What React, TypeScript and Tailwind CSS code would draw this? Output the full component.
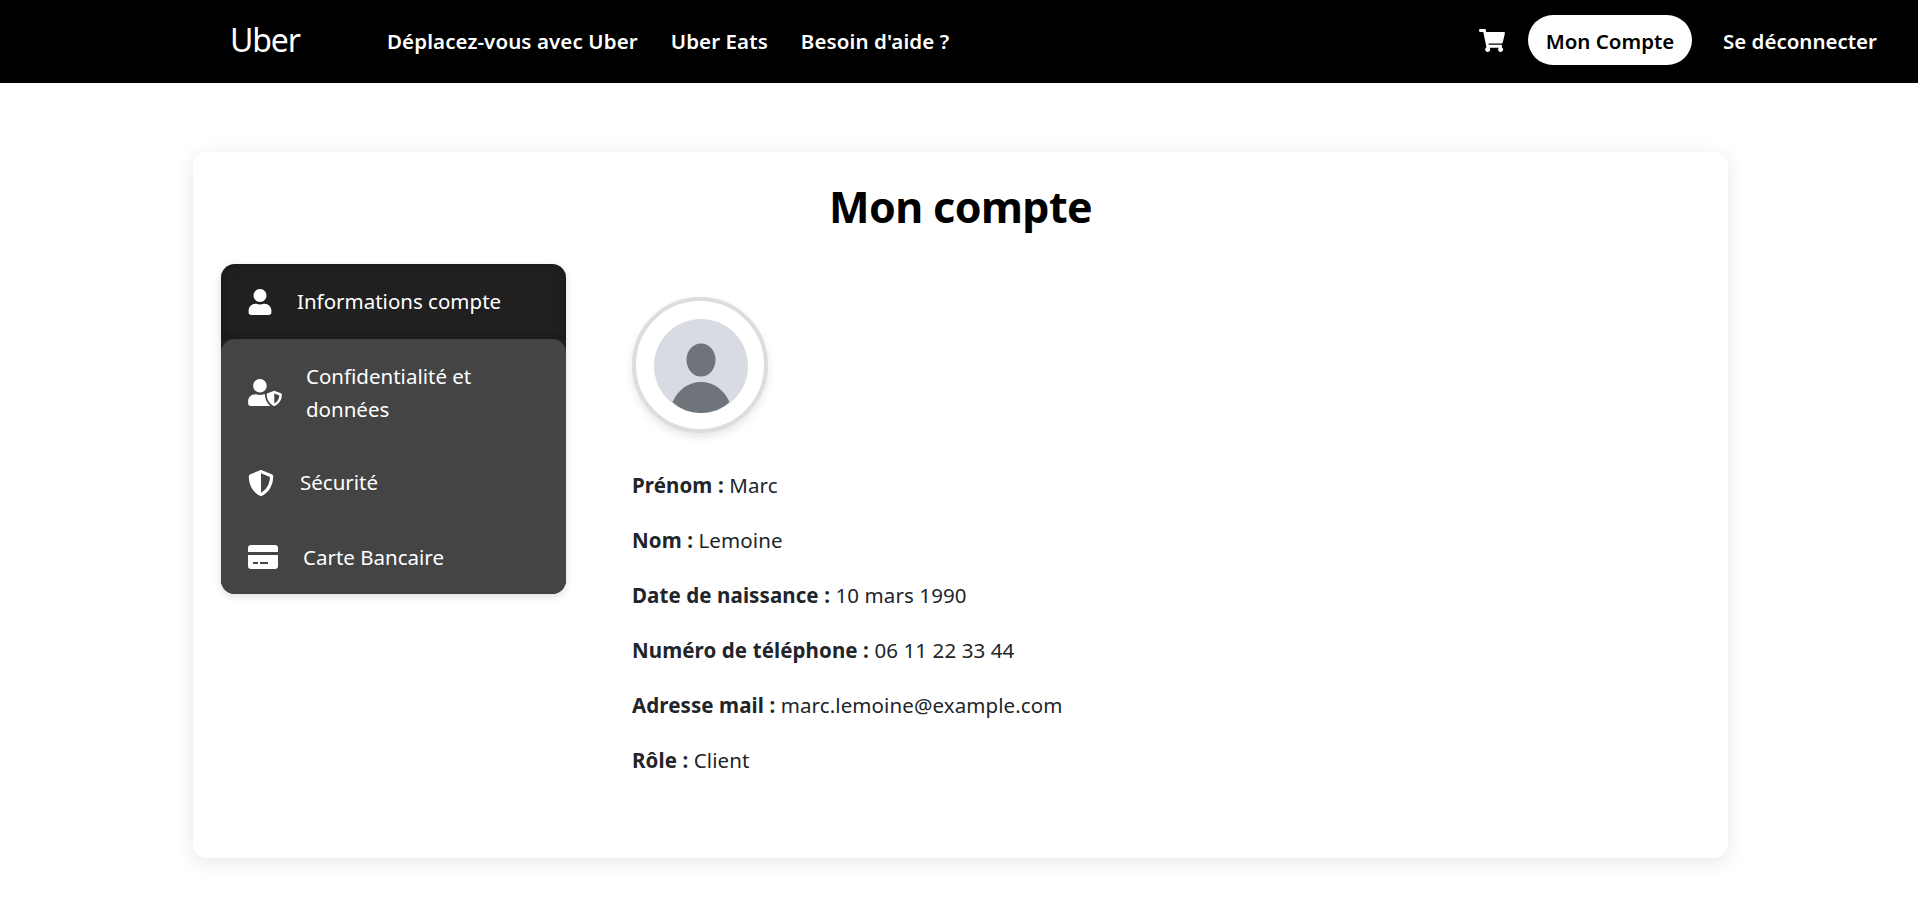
import { FaShieldAlt, FaShoppingCart, FaUser, FaUserShield } from "react-icons/fa";

const fields = [
  { label: "Prénom :", value: "Marc" },
  { label: "Nom :", value: "Lemoine" },
  { label: "Date de naissance :", value: "10 mars 1990" },
  { label: "Numéro de téléphone :", value: "06 11 22 33 44" },
  { label: "Adresse mail :", value: "marc.lemoine@example.com" },
  { label: "Rôle :", value: "Client" },
];

const Header = () => {
  return (
    <header className="h-[83px] bg-black text-white flex items-center">
      <div className="ml-[230px] w-[157px] text-[32px] font-normal tracking-[-1.1px] leading-none mb-[4px]">Uber</div>
      <nav className="flex gap-[33px] text-[20.5px] font-semibold tracking-[0.1px]">
        <a>Déplacez-vous avec Uber</a>
        <a>Uber Eats</a>
        <a>Besoin d'aide ?</a>
      </nav>
      <div className="ml-auto mr-[41px] flex items-center text-[20.5px] font-semibold">
        <FaShoppingCart className="w-[26px] h-[23px] mb-[2px]" />
        <a className="ml-[23px] w-[164px] h-[50px] mb-[3px] pt-[2px] rounded-full bg-white text-black flex items-center justify-center">Mon Compte</a>
        <a className="ml-[31px]">Se déconnecter</a>
      </div>
    </header>
  );
};

const CardIcon = () => {
  return (
    <svg viewBox="0 0 30 24" className="w-[30px] h-[24px]" fill="currentColor">
      <path d="M3 0 H27 A3 3 0 0 1 30 3 V7 H0 V3 A3 3 0 0 1 3 0 Z" />
      <path fillRule="evenodd" d="M0 10 H30 V21 A3 3 0 0 1 27 24 H3 A3 3 0 0 1 0 21 Z M5 17 V19 H10 V17 Z M12 17 V19 H20 V17 Z" />
    </svg>
  );
};

const Sidebar = () => {
  return (
    <aside className="w-[345px] h-[330px] shrink-0 rounded-[14px] bg-[#202020] text-white text-[20.5px] shadow-[0_2px_8px_rgba(0,0,0,0.15)]">
      <div className="h-[75px] rounded-t-[14px] flex items-center pl-[27px] shadow-[inset_0_0_12px_rgba(0,0,0,0.35)]">
        <FaUser className="w-[24px] h-[26px]" />
        <span className="ml-[25px]">Informations compte</span>
      </div>
      <div className="rounded-[14px] bg-[#444444] h-[255px]">
        <div className="h-[107px] flex items-center pl-[27px]">
          <FaUserShield className="w-[34px] h-[27px] shrink-0" />
          <span className="ml-[24px] leading-[33px] w-[200px]">Confidentialité et données</span>
        </div>
        <div className="h-[73px] flex items-center pl-[27px]">
          <FaShieldAlt className="w-[26px] h-[26px]" />
          <span className="ml-[26px]">Sécurité</span>
        </div>
        <div className="h-[75px] flex items-center pl-[27px]">
          <CardIcon />
          <span className="ml-[25px] pt-[2px]">Carte Bancaire</span>
        </div>
      </div>
    </aside>
  );
};

const Avatar = () => {
  return (
    <div className="w-[136px] h-[136px] rounded-full bg-white border-4 border-[#dddddd] shadow-[0_4px_8px_rgba(0,0,0,0.1)] flex items-center justify-center">
      <svg viewBox="0 0 94 94" className="w-[94px] h-[94px] ml-[1px] mt-[1px]">
        <circle cx="47" cy="47" r="47" fill="#d8dbe1" />
        <ellipse cx="47" cy="41" rx="14.5" ry="16.5" fill="#6e7479" />
        <path d="M18.5 83 C24 71 34 63 47 63 C60 63 70 71 75.5 83 C68 90 58 94 47 94 C36 94 26 90 18.5 83 Z" fill="#6e7479" />
      </svg>
    </div>
  );
};

const App = () => {
  return (
    <div className="min-h-[912px] bg-white font-['Noto_Sans',sans-serif]">
      <Header />
      <main className="w-[1535px] h-[706px] ml-[193px] mt-[69px] rounded-[14px] bg-white shadow-[0_4px_20px_rgba(0,0,0,0.1)] pt-[27px] px-[28px]">
        <h1 className="text-[43px] leading-[56px] font-bold text-center text-black tracking-[-0.6px]">Mon compte</h1>
        <div className="mt-[29px] flex">
          <Sidebar />
          <section className="ml-[66px] pt-[33px] text-[#212529] text-[20.5px] tracking-[0.1px]">
            <Avatar />
            <div className="mt-[37px] flex flex-col gap-[25px]">
              {fields.map((field) => (
                <p key={field.label} className="leading-[30px]">
                  <strong className="font-bold">{field.label}</strong> {field.value}
                </p>
              ))}
            </div>
          </section>
        </div>
      </main>
    </div>
  );
};

export default App;
